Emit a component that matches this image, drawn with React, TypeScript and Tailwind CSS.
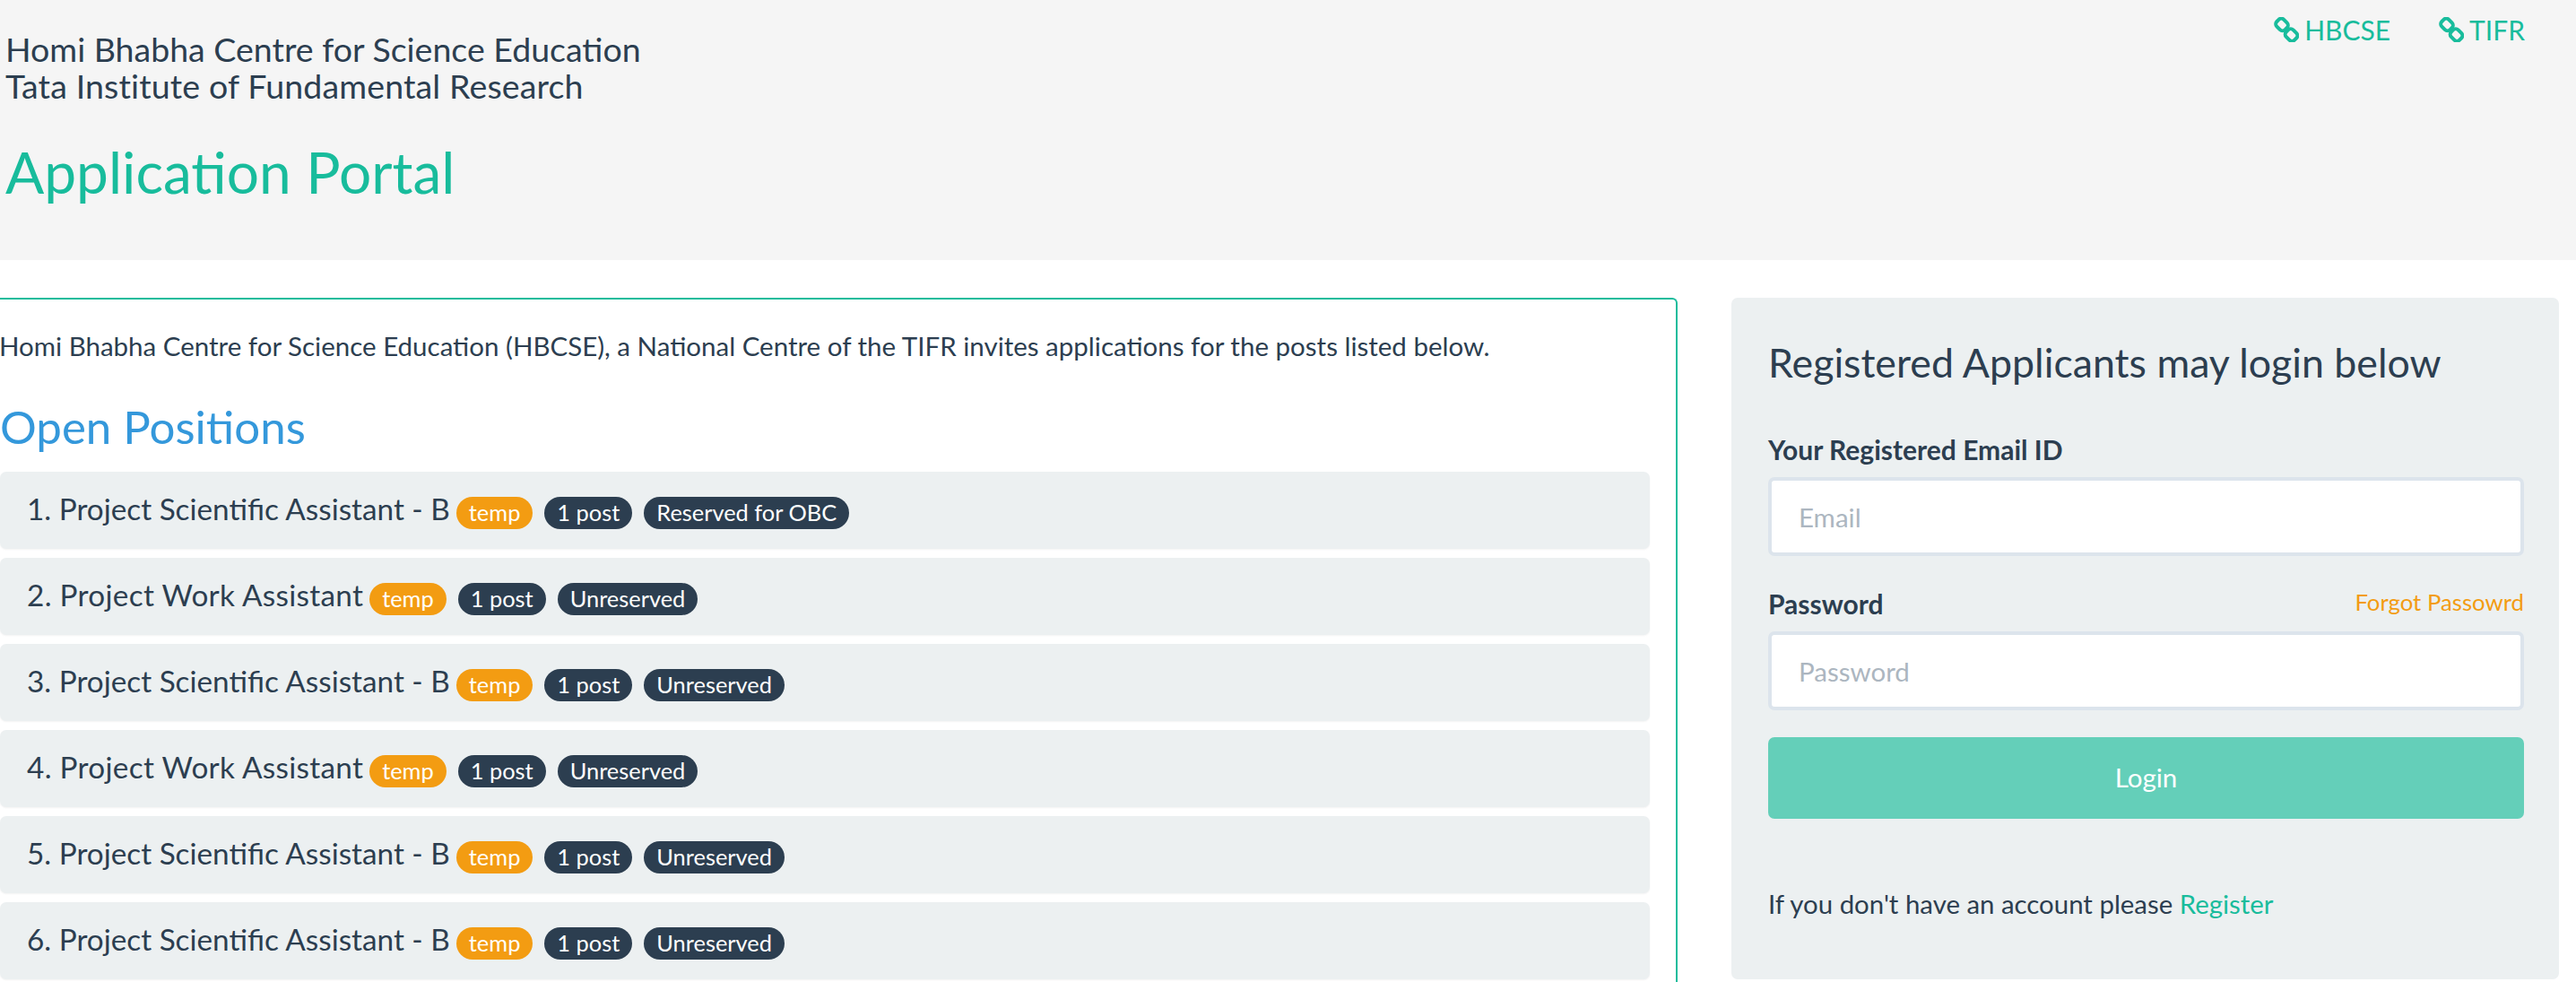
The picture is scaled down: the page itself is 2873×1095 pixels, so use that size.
import React from 'react'

const positions = [
  { title: 'Project Scientific Assistant - B', note: 'Reserved for OBC', spacing: '' },
  { title: 'Project Work Assistant', note: 'Unreserved', spacing: 'tracking-[0.3px]' },
  { title: 'Project Scientific Assistant - B', note: 'Unreserved', spacing: '' },
  { title: 'Project Work Assistant', note: 'Unreserved', spacing: 'tracking-[0.3px]' },
  { title: 'Project Scientific Assistant - B', note: 'Unreserved', spacing: '' },
  { title: 'Project Scientific Assistant - B', note: 'Unreserved', spacing: '' },
]

const ChainIcon = () => (
  <svg width="28" height="28" viewBox="0 0 28 28" fill="none" stroke="#18bc9c" strokeWidth="4" className="shrink-0">
    <rect x="2.5" y="3" width="13" height="11" rx="4" transform="rotate(45 9 8.5)" />
    <rect x="13" y="14.5" width="13" height="11" rx="4" transform="rotate(45 19.5 20)" />
  </svg>
)

const Badge = ({ className, children }: { className: string; children: React.ReactNode }) => (
  <span className={`inline-flex h-[36px] items-center rounded-[18px] px-[14px] text-[25.4px] leading-none text-white ${className}`}>
    {children}
  </span>
)

export default function App() {
  return (
    <div className="h-[1095px] overflow-hidden bg-white font-['Lato',sans-serif] text-[#2c3e50]">
      {/* Header */}
      <header className="flex h-[290px] justify-between bg-[#f5f5f5] pl-[6px] pr-[57px]">
        <div className="pt-[34px]">
          <p className="text-[37.5px] leading-[42px]">Homi Bhabha Centre for Science Education</p>
          <p className="-mt-px text-[37.5px] leading-[42px] tracking-[0.14px]">Tata Institute of Fundamental Research</p>
          <h1 className="mt-[35px] text-[64px] leading-[80px] text-[#18bc9c]">Application Portal</h1>
        </div>
        <nav className="flex gap-[54px] pt-[16px] text-[30px] leading-[34px] text-[#18bc9c]">
          <a className="flex h-[34px] items-center gap-[6px]"><ChainIcon />HBCSE</a>
          <a className="flex h-[34px] items-center gap-[6px]"><ChainIcon />TIFR</a>
        </nav>
      </header>

      <main className="flex pt-[42px]">
        {/* Open positions */}
        <section className="h-[800px] w-[1871px] rounded-tr-[6px] border-t-2 border-r-2 border-[#18bc9c] pr-[29px]">
          <p className="-ml-px pt-[34px] text-[29.5px] leading-[36px]">
            Homi Bhabha Centre for Science Education (HBCSE), a National Centre of the TIFR invites applications for the posts listed below.
          </p>
          <h2 className="mt-[42px] text-[51px] leading-[60px] text-[#3498db]">Open Positions</h2>
          <ul className="mt-[20px] flex flex-col gap-[10px]">
            {positions.map((p, i) => (
              <li key={i} className="flex h-[86px] items-center gap-[7px] rounded-[7px] bg-[#ecf0f1] pl-[30px] shadow-[0_1px_2px_rgba(0,0,0,0.05)]">
                <span className={`-mt-[4px] text-[33.3px] leading-[40px] ${p.spacing}`}>{i + 1}. {p.title}</span>
                <span className="mt-[5px] flex items-center gap-[13px]">
                  <Badge className="bg-[#f39c12]">temp</Badge>
                  <Badge className="bg-[#2c3e50]">1 post</Badge>
                  <Badge className="bg-[#2c3e50]">{p.note}</Badge>
                </span>
              </li>
            ))}
          </ul>
        </section>

        {/* Login */}
        <aside className="ml-[60px] h-[760px] w-[923px] rounded-[7px] bg-[#ecf0f1] pl-[41px] pr-[39px] pt-[47px]">
          <h3 className="text-[44.7px] leading-[50px]">Registered Applicants may login below</h3>
          <form>
            <label className="mt-[55px] block text-[30px] leading-[34px] font-bold">Your Registered Email ID</label>
            <input
              placeholder="Email"
              className="mt-[14px] block h-[88px] w-full rounded-[7px] border-[4px] border-[#dce4ec] bg-white px-[30px] text-[29.5px] outline-none placeholder:text-[#acb6c0]"
            />
            <div className="mt-[36px] flex items-center justify-between">
              <label className="text-[30px] leading-[34px] font-bold">Password</label>
              <a className="-mt-[4px] text-[25.75px] leading-[30px] text-[#f39c12]">Forgot Passowrd</a>
            </div>
            <input
              placeholder="Password"
              className="mt-[14px] block h-[88px] w-full rounded-[7px] border-[4px] border-[#dce4ec] bg-white px-[30px] text-[29.5px] outline-none placeholder:text-[#acb6c0]"
            />
            <button type="button" className="mt-[30px] block h-[91px] w-full rounded-[7px] bg-[#64cfb9] text-[29.5px] text-white">
              Login
            </button>
          </form>
          <p className="mt-[78px] text-[29.4px] leading-[34px]">
            If you don't have an account please <a className="text-[#18bc9c]">Register</a>
          </p>
        </aside>
      </main>
    </div>
  )
}
